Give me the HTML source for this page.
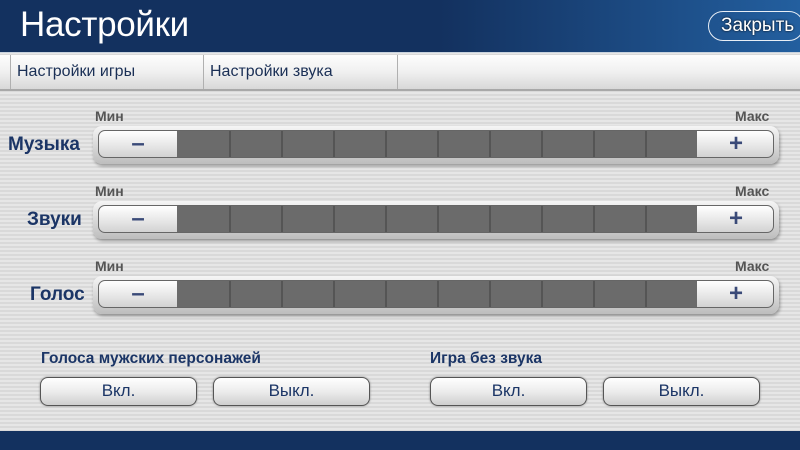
<!DOCTYPE html>
<html><head><meta charset="utf-8"><style>
*{margin:0;padding:0;box-sizing:border-box}
body{width:800px;height:450px;overflow:hidden;position:relative;font-family:"Liberation Sans","DejaVu Sans",sans-serif;
background:repeating-linear-gradient(#e6e6e6 0 2px,#d9d9d9 2px 4px);}
.hdr{position:absolute;left:0;top:0;width:800px;height:53px;background:linear-gradient(90deg,#13315f 0,#13315f 55%,#235f9f 100%);border-bottom:1px solid #c9d3de}
.hdr h1{position:absolute;left:20px;top:5px;color:#fff;font-weight:normal;font-size:35px;letter-spacing:-0.3px}
.close{position:absolute;left:708px;top:11px;width:96px;height:30px;border:1px solid #e8eef6;border-radius:15px;color:#fff;font-size:19px;padding:3px 0 0 12px;text-shadow:0 0 2px #000}
.tabs{position:absolute;left:0;top:55px;width:800px;height:36px;background:linear-gradient(#fdfdfd,#f0f0f0 50%,#d8d8d8);border-bottom:2px solid #a8a8a8}
.tab{position:absolute;top:0;height:34px;border-left:1px solid #b0b0b0;color:#1a2f55;font-size:16px;padding:8px 0 0 6px}
.lbl{position:absolute;color:#1b3566;font-weight:bold;font-size:19px}
.mm{position:absolute;color:#555;font-weight:bold;font-size:14px}
.bar{position:absolute;left:93px;width:686px;height:38px;border-radius:9px;background:linear-gradient(#f5f5f5,#bdbdbd);box-shadow:1px 2px 3px rgba(0,0,0,.35)}
.in{position:absolute;left:5px;top:4px;width:676px;height:28px;border:1px solid #666;border-radius:7px;background:#6b6b6b;overflow:hidden}
.seg{position:absolute;top:0;height:28px;border-left:2px solid #555}
.b{position:absolute;top:0;width:78px;height:28px;background:linear-gradient(#fff,#e8e8e8 50%,#cfcfcf);color:#3a4a78;font-size:24px;text-align:center;line-height:26px;font-weight:bold}
.btn{position:absolute;top:377px;height:29px;border:1.5px solid #555;border-radius:8px;background:linear-gradient(#fff,#ececec 50%,#cfcfcf);color:#1b3566;font-size:17px;text-align:center;line-height:26px;box-shadow:0 0 2px #888}
.foot{position:absolute;left:0;top:431px;width:800px;height:19px;background:#13315f}
</style></head><body>
<div class="hdr"><h1>Настройки</h1><div class="close">Закрыть</div></div>
<div class="tabs"><div class="tab" style="left:10px;width:194px">Настройки игры</div><div class="tab" style="left:203px;width:195px">Настройки звука</div><div class="tab" style="left:397px;width:1px"></div></div>

<div class="mm" style="left:95px;top:108px">Мин</div><div class="mm" style="left:735px;top:108px">Макс</div>
<div class="lbl" style="left:8px;top:134px">Музыка</div>
<div class="bar" style="top:126px"><div class="in">
<div class="seg" style="left:130px"></div><div class="seg" style="left:182px"></div><div class="seg" style="left:234px"></div><div class="seg" style="left:286px"></div><div class="seg" style="left:338px"></div><div class="seg" style="left:390px"></div><div class="seg" style="left:442px"></div><div class="seg" style="left:494px"></div><div class="seg" style="left:546px"></div>
<div class="b" style="left:0">–</div><div class="b" style="left:598px">+</div></div></div>

<div class="mm" style="left:95px;top:183px">Мин</div><div class="mm" style="left:735px;top:183px">Макс</div>
<div class="lbl" style="left:27px;top:209px">Звуки</div>
<div class="bar" style="top:201px"><div class="in">
<div class="seg" style="left:130px"></div><div class="seg" style="left:182px"></div><div class="seg" style="left:234px"></div><div class="seg" style="left:286px"></div><div class="seg" style="left:338px"></div><div class="seg" style="left:390px"></div><div class="seg" style="left:442px"></div><div class="seg" style="left:494px"></div><div class="seg" style="left:546px"></div>
<div class="b" style="left:0">–</div><div class="b" style="left:598px">+</div></div></div>

<div class="mm" style="left:95px;top:258px">Мин</div><div class="mm" style="left:735px;top:258px">Макс</div>
<div class="lbl" style="left:30px;top:284px">Голос</div>
<div class="bar" style="top:276px"><div class="in">
<div class="seg" style="left:130px"></div><div class="seg" style="left:182px"></div><div class="seg" style="left:234px"></div><div class="seg" style="left:286px"></div><div class="seg" style="left:338px"></div><div class="seg" style="left:390px"></div><div class="seg" style="left:442px"></div><div class="seg" style="left:494px"></div><div class="seg" style="left:546px"></div>
<div class="b" style="left:0">–</div><div class="b" style="left:598px">+</div></div></div>

<div class="lbl" style="left:41px;top:350px;font-size:15.5px">Голоса мужских персонажей</div>
<div class="lbl" style="left:430px;top:350px;font-size:15.5px">Игра без звука</div>
<div class="btn" style="left:40px;width:157px">Вкл.</div>
<div class="btn" style="left:213px;width:157px">Выкл.</div>
<div class="btn" style="left:430px;width:157px">Вкл.</div>
<div class="btn" style="left:603px;width:157px">Выкл.</div>
<div class="foot"></div>
</body></html>
